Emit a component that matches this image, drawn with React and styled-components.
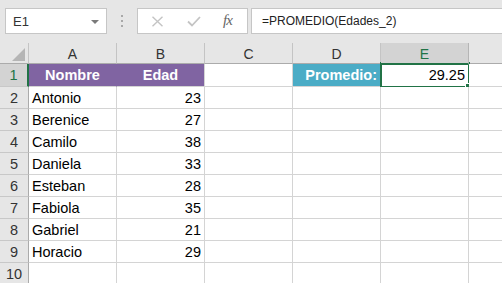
import React from "react";
import styled, { createGlobalStyle } from "styled-components";

const Global = createGlobalStyle`
  html, body { margin: 0; padding: 0; background: #ffffff; overflow: hidden; }
  body { font-family: "Liberation Sans", Arial, sans-serif; }
`;

const Page = styled.div`
  width: 502px;
  height: 283px;
  overflow: hidden;
  background: #ffffff;
`;

const Toolbar = styled.div`
  display: flex;
  align-items: flex-start;
  height: 43px;
  padding: 8px 0 0 5px;
  box-sizing: border-box;
  background: #e6e6e6;
`;

const NameBox = styled.div`
  display: flex;
  align-items: center;
  justify-content: space-between;
  width: 102px;
  height: 26px;
  box-sizing: border-box;
  border: 1px solid #c6c6c6;
  background: #fff;
  padding: 0 7px 0 7px;
  font-size: 13px;
  color: #333;
`;

const Caret = styled.span`
  width: 0;
  height: 0;
  border-left: 4px solid transparent;
  border-right: 4px solid transparent;
  border-top: 4px solid #7a7a7a;
  margin-top: 1px;
`;

const Grip = styled.div`
  width: 30px;
  height: 26px;
  display: flex;
  flex-direction: column;
  align-items: center;
  justify-content: center;
  gap: 3px;
`;

const Dot = styled.span`
  width: 2px;
  height: 2px;
  background: #a8a8a8;
`;

const FxBox = styled.div`
  display: flex;
  align-items: center;
  width: 111px;
  height: 26px;
  box-sizing: border-box;
  border: 1px solid #c6c6c6;
  background: #fff;
  padding-left: 13px;
  gap: 23px;
`;

const FxLabel = styled.span`
  font-family: "Liberation Serif", "Times New Roman", serif;
  font-style: italic;
  font-size: 15px;
  color: #666;
  letter-spacing: -1px;
  margin-left: -1px;
  margin-top: -2px;
`;

const Formula = styled.div`
  flex: 1;
  display: flex;
  align-items: center;
  height: 26px;
  margin-left: 3px;
  box-sizing: border-box;
  border: 1px solid #c6c6c6;
  border-right: none;
  background: #fff;
  padding-left: 10px;
  font-size: 12px;
  color: #222;
`;

const Sheet = styled.div`
  display: grid;
  grid-template-columns: 29px repeat(6, 88px);
  grid-auto-rows: 22px;
  grid-template-rows: 21px 23px;
  font-size: 14.5px;
  color: #000;
`;

const HeadCell = styled.div`
  display: flex;
  align-items: center;
  justify-content: center;
  box-sizing: border-box;
  background: ${(p) => (p.$active ? "#d3d3d3" : "#e6e6e6")};
  color: ${(p) => (p.$active ? "#217346" : "#333")};
  border-right: 1px solid ${(p) => (p.$active ? "#b5b5b5" : "#c4c4c4")};
  border-bottom: 1px solid ${(p) => (p.$active ? "#217346" : "#ababab")};
  font-size: 14px;
  padding-top: 1px;
  ${(p) => p.$active && "border-bottom-width: 2px; margin-bottom: -1px; position: relative; z-index: 1;"}
`;

const Corner = styled.div`
  position: relative;
  box-sizing: border-box;
  background: #e6e6e6;
  border-right: 1px solid #c4c4c4;
  border-bottom: 1px solid #ababab;
`;

const CornerTri = styled.span`
  position: absolute;
  right: 3px;
  bottom: 2px;
  width: 0;
  height: 0;
  border-left: 13px solid transparent;
  border-bottom: 13px solid #b5b5b5;
`;

const RowHead = styled.div`
  display: flex;
  align-items: center;
  justify-content: center;
  box-sizing: border-box;
  background: ${(p) => (p.$active ? "#d3d3d3" : "#e6e6e6")};
  color: ${(p) => (p.$active ? "#217346" : "#333")};
  border-bottom: 1px solid #c8c8c8;
  border-right: ${(p) => (p.$active ? "2px solid #217346" : "1px solid #ababab")};
  font-size: 14.5px;
`;

const Cell = styled.div`
  position: relative;
  display: flex;
  align-items: center;
  justify-content: ${(p) => p.$align || "flex-start"};
  box-sizing: border-box;
  padding: 0 3px 0 3px;
  background: ${(p) => p.$bg || "#fff"};
  color: ${(p) => (p.$bg ? "#fff" : "#000")};
  font-weight: ${(p) => (p.$bold ? 700 : 400)};
  border-right: 1px solid ${(p) => (p.$bg && p.$joinRight ? p.$bg : "#d4d4d4")};
  border-bottom: 1px solid #d4d4d4;
  white-space: nowrap;
`;

const Selection = styled.span`
  position: absolute;
  left: -1px;
  top: -2px;
  right: -2px;
  bottom: -2px;
  border: 2px solid #217346;
  pointer-events: none;
`;

const Handle = styled.span`
  position: absolute;
  right: -4px;
  bottom: -4px;
  width: 5px;
  height: 5px;
  background: #217346;
  border: 1px solid #fff;
`;

const CellText = styled.span`
  position: relative;
`;

/* Column F is only partly in view; its letter sits past the right edge. */
const cols = ["A", "B", "C", "D", "E", ""];

const people = [
  ["Antonio", 23],
  ["Berenice", 27],
  ["Camilo", 38],
  ["Daniela", 33],
  ["Esteban", 28],
  ["Fabiola", 35],
  ["Gabriel", 21],
  ["Horacio", 29],
];

function CloseIcon() {
  return (
    <svg width="13" height="11" viewBox="0 0 13 11">
      <path d="M1.5 0.8 L11.5 10.2 M11.5 0.8 L1.5 10.2" stroke="#c4c4c4" strokeWidth="1.4" fill="none" />
    </svg>
  );
}

function CheckIcon() {
  return (
    <svg width="14" height="11" viewBox="0 0 14 11">
      <path d="M1 5.5 L5 9.5 L13 1" stroke="#c4c4c4" strokeWidth="1.8" fill="none" />
    </svg>
  );
}

export default function App() {
  return (
    <Page>
      <Global />
      <Toolbar>
        <NameBox>
          <span>E1</span>
          <Caret />
        </NameBox>
        <Grip>
          <Dot />
          <Dot />
          <Dot />
        </Grip>
        <FxBox>
          <CloseIcon />
          <CheckIcon />
          <FxLabel>fx</FxLabel>
        </FxBox>
        <Formula>=PROMEDIO(Edades_2)</Formula>
      </Toolbar>
      <Sheet>
        <Corner>
          <CornerTri />
        </Corner>
        {cols.map((c, i) => (
          <HeadCell key={i} $active={c === "E"}>
            {c}
          </HeadCell>
        ))}

        <RowHead $active>1</RowHead>
        <Cell $bg="#8064a2" $bold $align="center" $joinRight>
          Nombre
        </Cell>
        <Cell $bg="#8064a2" $bold $align="center">
          Edad
        </Cell>
        <Cell />
        <Cell $bg="#4bacc6" $bold $align="flex-end">
          Promedio:
        </Cell>
        <Cell $align="flex-end">
          <CellText>29.25</CellText>
          <Selection>
            <Handle />
          </Selection>
        </Cell>
        <Cell />

        {people.map(([name, age], i) => (
          <React.Fragment key={name}>
            <RowHead>{i + 2}</RowHead>
            <Cell>{name}</Cell>
            <Cell $align="flex-end">{age}</Cell>
            <Cell />
            <Cell />
            <Cell />
            <Cell />
          </React.Fragment>
        ))}

        <RowHead>10</RowHead>
        <Cell />
        <Cell />
        <Cell />
        <Cell />
        <Cell />
        <Cell />
      </Sheet>
    </Page>
  );
}
